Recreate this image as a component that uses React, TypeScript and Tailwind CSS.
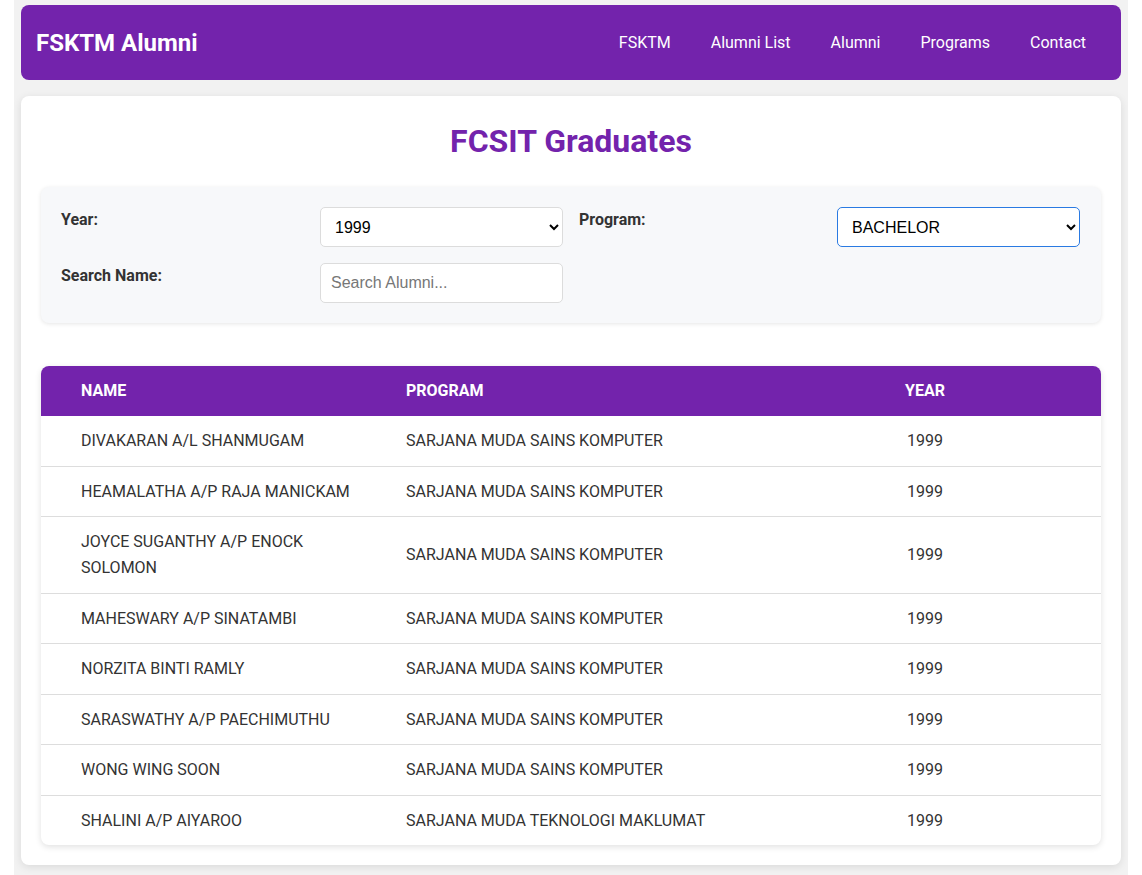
import { useState } from "react"

interface Graduate {
  name: string;
  program: string;
  year: string;
}

const graduates: Graduate[] = [
  { name: "DIVAKARAN A/L SHANMUGAM", program: "SARJANA MUDA SAINS KOMPUTER", year: "1999" },
  { name: "HEAMALATHA A/P RAJA MANICKAM", program: "SARJANA MUDA SAINS KOMPUTER", year: "1999" },
  { name: "JOYCE SUGANTHY A/P ENOCK SOLOMON", program: "SARJANA MUDA SAINS KOMPUTER", year: "1999" },
  { name: "MAHESWARY A/P SINATAMBI", program: "SARJANA MUDA SAINS KOMPUTER", year: "1999" },
  { name: "NORZITA BINTI RAMLY", program: "SARJANA MUDA SAINS KOMPUTER", year: "1999" },
  { name: "SARASWATHY A/P PAECHIMUTHU", program: "SARJANA MUDA SAINS KOMPUTER", year: "1999" },
  { name: "WONG WING SOON", program: "SARJANA MUDA SAINS KOMPUTER", year: "1999" },
  { name: "SHALINI A/P AIYAROO", program: "SARJANA MUDA TEKNOLOGI MAKLUMAT", year: "1999" },
]

const navLinks = ["FSKTM", "Alumni List", "Alumni", "Programs", "Contact"]

export default function App() {
  const [year, setYear] = useState("1999")
  const [program, setProgram] = useState("BACHELOR")
  const [search, setSearch] = useState("")

  const rows = graduates.filter((g) => g.name.toLowerCase().includes(search.toLowerCase()))

  return (
    <div className="min-h-[875px] bg-white px-[14px] font-['Roboto',sans-serif] text-[#333]">
      <div className="min-h-[875px] bg-[#f2f2f2] px-[7px] pt-[5px]">
        {/* Navbar */}
        <nav className="flex h-[75px] items-center justify-between rounded-lg bg-[#7323ac] px-[15px] text-white">
          <span className="text-[24px] font-bold">FSKTM Alumni</span>
          <ul className="flex items-center">
            {navLinks.map((link) => (
              <li key={link}>
                <a href="#" className="px-5 text-[16px] text-white">
                  {link}
                </a>
              </li>
            ))}
          </ul>
        </nav>

        {/* Main card */}
        <div className="mt-4 rounded-lg bg-white p-5 shadow-[0_2px_8px_rgba(0,0,0,0.1)]">
          <h1 className="mb-[21px] text-center text-[32px] font-bold leading-[50px] text-[#7323ac]">
            FCSIT Graduates
          </h1>

          <div className="grid grid-cols-4 gap-4 rounded-lg bg-[#f7f8fa] p-5 shadow-[0_1px_4px_rgba(0,0,0,0.1)]">
            <label className="pt-px text-[16px] font-bold text-[#333]">Year:</label>
            <select
              value={year}
              onChange={(e) => setYear(e.target.value)}
              className="h-10 w-full rounded-[5px] border border-[#dcdcdc] bg-white px-[10px] font-['Liberation_Sans',Arial,sans-serif] text-[16px] text-black"
            >
              <option value="1999">1999</option>
              <option value="2000">2000</option>
              <option value="2001">2001</option>
            </select>
            <label className="pt-px text-[16px] font-bold text-[#333]">Program:</label>
            <select
              value={program}
              onChange={(e) => setProgram(e.target.value)}
              className="-ml-px h-10 w-full rounded-[5px] border border-[#2a7ae2] bg-white px-[10px] font-['Liberation_Sans',Arial,sans-serif] text-[16px] text-black"
            >
              <option value="BACHELOR">BACHELOR</option>
              <option value="MASTER">MASTER</option>
              <option value="PHD">PHD</option>
            </select>

            <label className="pt-px text-[16px] font-bold text-[#333]">Search Name:</label>
            <input
              type="text"
              value={search}
              onChange={(e) => setSearch(e.target.value)}
              placeholder="Search Alumni..."
              className="h-10 w-full rounded-[5px] border border-[#dcdcdc] bg-white px-[10px] font-['Liberation_Sans',Arial,sans-serif] text-[16px] text-black placeholder:text-[#777] focus:outline-none"
            />
          </div>

          {/* Table */}
          <div className="mt-[43px] overflow-hidden rounded-lg shadow-[0_2px_6px_rgba(0,0,0,0.12)]">
            <table className="w-full table-fixed border-collapse">
              <colgroup>
                <col className="w-[325px]" />
                <col className="w-[499px]" />
                <col />
              </colgroup>
              <thead className="bg-[#7323ac] text-white">
                <tr className="h-[50px]">
                  <th className="pl-10 pr-3 text-left text-[16px] font-bold">NAME</th>
                  <th className="pl-10 pr-3 text-left text-[16px] font-bold">PROGRAM</th>
                  <th className="pl-10 pr-3 text-left text-[16px] font-bold">YEAR</th>
                </tr>
              </thead>
              <tbody>
                {rows.map((g, i) => (
                  <tr key={g.name} className={i < rows.length - 1 ? "border-b border-[#dddddd]" : ""}>
                    <td className="pb-[11.5px] pl-10 pr-3 pt-3 text-[16px] leading-[26px] text-[#333]">{g.name}</td>
                    <td className="pb-[11.5px] pl-10 pr-3 pt-3 text-[16px] leading-[26px] text-[#333]">{g.program}</td>
                    <td className="pb-[11.5px] pl-[42px] pr-3 pt-3 text-[16px] leading-[26px] text-[#333]">{g.year}</td>
                  </tr>
                ))}
              </tbody>
            </table>
          </div>
        </div>
      </div>
    </div>
  )
}
